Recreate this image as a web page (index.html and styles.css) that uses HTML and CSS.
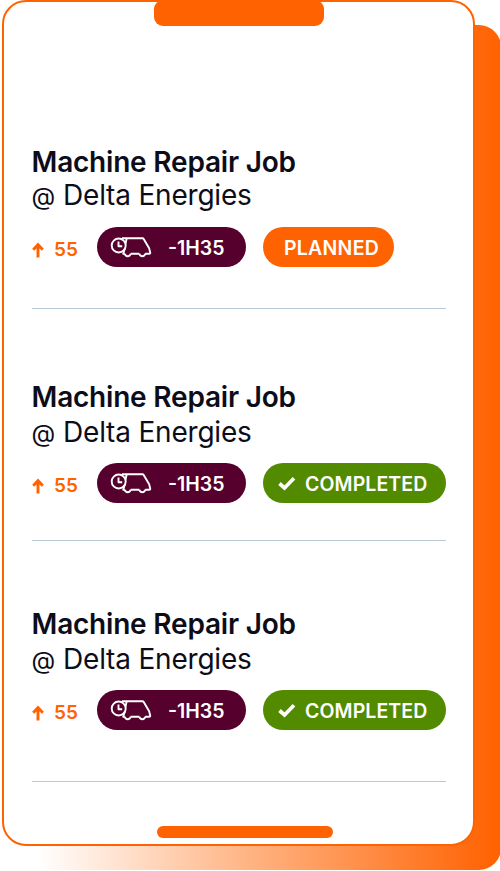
FILE: index.html
```html
<!DOCTYPE html>
<html lang="en">
<head>
<meta charset="utf-8">
<title>Jobs</title>
<link rel="stylesheet" href="styles.css">
</head>
<body>
<svg class="defs" aria-hidden="true">
  <symbol id="arrow" viewBox="0 0 12 16"><path d="M6 15.500V3M1.200 7.700 6 2.700l4.800 5" fill="none" stroke="currentColor" stroke-width="2.900"/></symbol>
  <symbol id="van" viewBox="0 0 42 24"><g fill="none" stroke="currentColor" stroke-width="1.900" stroke-linejoin="round"><circle cx="8.700" cy="10.500" r="7"/><path d="M8.500 6.500v4.700h3.700M12 3.300H32.500c.6 0 .9.200 1.200.8l5 8.300c.4.700.6 1.200.7 1.800l.8 3.300c.2.800-.2 1.300-1 1.300H35.300M29.300 18.800H20.700M14.700 18.800H13.200L15 13M15.500 8.500 16.700 3.500M14.700 18.800c.8 3.200 5.200 3.200 6 0M29.300 18.800c.8 3.200 5.200 3.200 6 0"/></g></symbol>
  <symbol id="check" viewBox="0 0 18 15"><path d="M1.500 7.500 6.500 12 16 2.200" fill="none" stroke="currentColor" stroke-width="3.700"/></symbol>
</svg>
<div class="backdrop"></div>
<main class="phone">
  <div class="notch"></div>
  <section class="job first">
    <h2>Machine Repair Job</h2>
    <p><span class="at">@</span>Delta Energies</p>
    <div class="meta">
      <span class="score"><svg><use href="#arrow"/></svg><span>55</span></span>
      <span class="pill travel"><svg><use href="#van"/></svg><span>-1H35</span></span>
      <span class="pill planned"><span>PLANNED</span></span>
    </div>
  </section>
  <section class="job second">
    <h2>Machine Repair Job</h2>
    <p><span class="at">@</span>Delta Energies</p>
    <div class="meta">
      <span class="score"><svg><use href="#arrow"/></svg><span>55</span></span>
      <span class="pill travel"><svg><use href="#van"/></svg><span>-1H35</span></span>
      <span class="pill completed"><svg><use href="#check"/></svg><span>COMPLETED</span></span>
    </div>
  </section>
  <section class="job third">
    <h2>Machine Repair Job</h2>
    <p><span class="at">@</span>Delta Energies</p>
    <div class="meta">
      <span class="score"><svg><use href="#arrow"/></svg><span>55</span></span>
      <span class="pill travel"><svg><use href="#van"/></svg><span>-1H35</span></span>
      <span class="pill completed"><svg><use href="#check"/></svg><span>COMPLETED</span></span>
    </div>
  </section>
  <div class="home"></div>
</main>
</body>
</html>
```

FILE: styles.css
```css
* { box-sizing: border-box; }
body {
  position: relative;
  width: 500px;
  height: 871px;
  margin: 0;
  overflow: hidden;
  background: #fff;
  font-family: Inter, "Liberation Sans", sans-serif;
  color: #0d0d1a;
}
.defs { position: absolute; width: 0; height: 0; }
.backdrop {
  position: absolute;
  left: 29px;
  top: 25px;
  width: 472px;
  height: 845px;
  border-radius: 22px;
  background: linear-gradient(90deg, #fff 0%, #fff 2%, #ffb382 47%, #ff6b10 93%, #ff6200 100%);
}
.phone {
  position: relative;
  display: flex;
  flex-direction: column;
  width: 473px;
  height: 846px;
  margin-left: 2px;
  padding: 0 27px 0 28px;
  border: 2px solid #ff6200;
  border-radius: 24px;
  background: #fff;
}
.notch {
  width: 170px;
  height: 26px;
  margin: -2px 0 0 122px;
  border-radius: 9px;
  background: #ff6200;
  flex: none;
}
.job {
  width: 414px;
  border-bottom: 1.5px solid #b9cad7;
  flex: none;
}
.first { height: 283px; padding-top: 118px; }
.second { height: 232px; padding-top: 70px; }
.third { height: 241px; padding-top: 65px; }
h2, p {
  height: 34px;
  margin: 0;
  font-size: 28px;
  line-height: 34px;
  white-space: nowrap;
}
h2 { font-weight: 600; letter-spacing: -0.2px; line-height: 36px; text-indent: -0.5px; }
p { display: flex; font-weight: 400; letter-spacing: -0.2px; line-height: 35px; }
.at { width: 31px; font-size: 24.5px; line-height: 37px; text-indent: -0.5px; }
.second p, .third p { margin-top: 2px; }
.meta {
  display: flex;
  height: 40px;
  margin-top: 15px;
}
.second .meta, .third .meta { margin-top: 14px; }
.score {
  display: flex;
  align-items: center;
  width: 65px;
  gap: 10px;
  padding-top: 5px;
  color: #ff6200;
  font-size: 19px;
  font-weight: 600;
}
.score svg { width: 12px; height: 16px; }
.pill {
  display: flex;
  align-items: center;
  height: 40px;
  border-radius: 20px;
  color: #fff;
  font-size: 19.5px;
  font-weight: 570;
  white-space: nowrap;
}
.pill span { padding-top: 2px; line-height: 24px; }
.travel {
  width: 149px;
  margin-right: 17px;
  padding-left: 13px;
  background: #55002d;
}
.travel svg { width: 42px; height: 24px; margin-right: 16px; }
.planned { width: 131px; padding-left: 21px; background: #ff6200; letter-spacing: 0.25px; }
.completed { width: 183px; padding-left: 15px; background: #538b00; letter-spacing: 0.1px; }
.completed svg { width: 18px; height: 15px; margin-right: 9px; }
.home {
  width: 176px;
  height: 12px;
  margin: 44px 0 0 125px;
  border-radius: 6px;
  background: #ff6200;
  flex: none;
}
```
